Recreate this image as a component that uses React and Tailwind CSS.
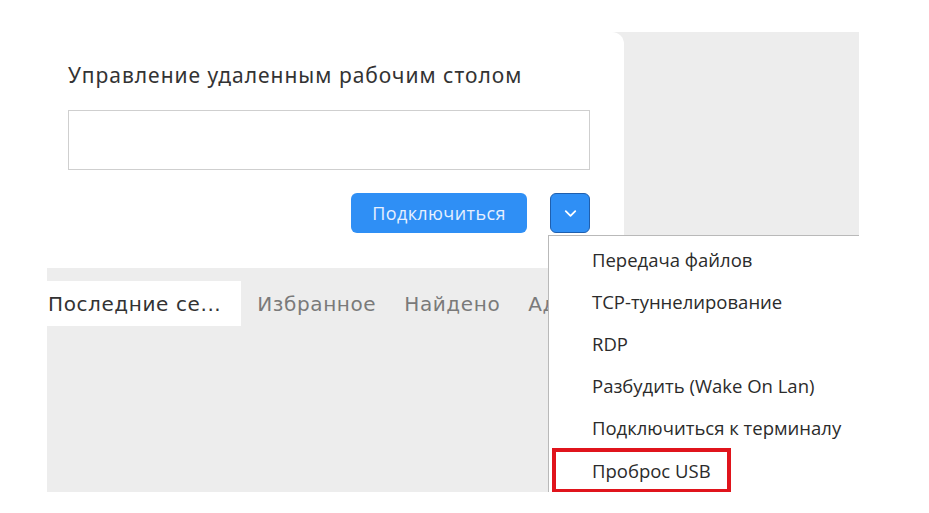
import { ChevronDown } from 'lucide-react';

const menuItems = [
  'Передача файлов',
  'TCP-туннелирование',
  'RDP',
  'Разбудить (Wake On Lan)',
  'Подключиться к терминалу',
];

const tabs = ['Избранное', 'Найдено', 'Адресная книга'];

export default function App() {
  return (
    <div className="min-h-screen bg-white pt-[32px] pl-[47px]">
      <div className="relative w-[812px] h-[460px] bg-[#ededed] overflow-hidden">
        {/* Connection card */}
        <div className="w-[577px] h-[236px] bg-white rounded-tr-xl pl-[21px] pr-[34px] pt-[30px]">
          <h1 className="text-[21px] leading-[26px] tracking-[1px] text-[#333] font-['Noto_Sans',sans-serif] whitespace-nowrap">
            Управление удаленным рабочим столом
          </h1>
          <input
            type="text"
            className="mt-[22px] w-full h-[60px] border border-[#cfcfcf] bg-white outline-none px-3"
          />
          <div className="flex justify-end items-center gap-[23px] mt-[23px]">
            <button className="h-[40px] w-[176px] rounded-md bg-[#2f8ff5] text-[#e6f0ff] text-[18px] tracking-[0.4px] font-['Open_Sans',sans-serif]">
              Подключиться
            </button>
            <button className="h-[40px] w-[40px] rounded-md bg-[#2f8ff5] border border-[#1f5fae] flex items-center justify-center">
              <ChevronDown className="w-[19px] h-[19px] text-white" strokeWidth={2.25} />
            </button>
          </div>
        </div>

        {/* Session tabs, clipped where the menu starts */}
        <div className="flex items-center mt-[13px] h-[45px] w-[501px] overflow-hidden font-['DejaVu_Sans',sans-serif] text-[20px] tracking-[0.6px] whitespace-nowrap">
          <div className="h-full flex items-center bg-white pl-[1px] pr-[20px] text-[#333]">
            Последние се...
          </div>
          <div className="flex items-center gap-[28px] pl-[16px] text-[#7a7a7a]">
            {tabs.map((t) => (
              <span key={t}>{t}</span>
            ))}
          </div>
        </div>

        {/* Dropdown menu */}
        <div className="absolute left-[501px] top-[203px] w-[311px] h-[257px] bg-white border-l border-t border-[#b9b9b9] pt-[3px] font-['Open_Sans',sans-serif] text-[18.5px] text-[#2b2b2b] whitespace-nowrap">
          {menuItems.map((item) => (
            <div key={item} className="h-[42px] flex items-center pl-[43px]">
              {item}
            </div>
          ))}
          <div className="-mt-px ml-[3px] w-[179px] h-[45px] border-4 border-[#e0141c] flex items-center pl-[36px]">
            Проброс USB
          </div>
        </div>
      </div>
    </div>
  );
}
